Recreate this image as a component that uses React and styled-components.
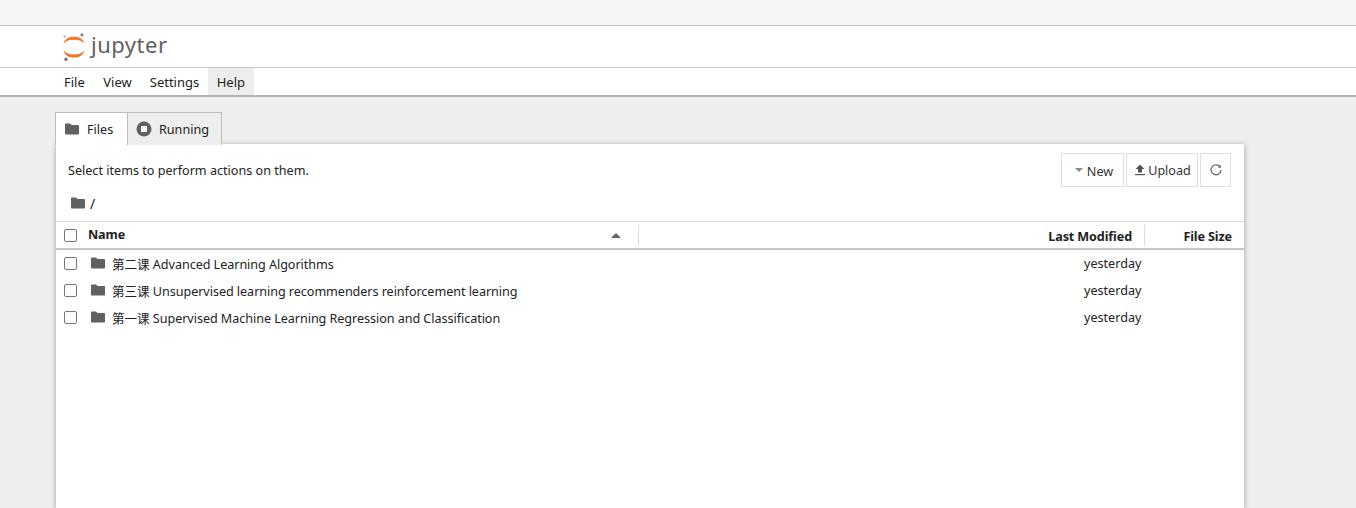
import React from "react";
import styled, { createGlobalStyle } from "styled-components";

const GlobalStyle = createGlobalStyle`
html, body {
  margin: 0;
  padding: 0;
  height: 508px;
  overflow: hidden;
  background: #eeeeee;
  font-family: "Noto Sans", "Noto Sans CJK SC", sans-serif;
  font-size: 12.6px;
  color: #222;
}
* { box-sizing: border-box; }
`

const Page = styled.div`
height: 508px;
display: flex;
flex-direction: column;
overflow: hidden;
`

const BrowserStrip = styled.div`
height: 26px;
flex: none;
background: #f6f6f6;
border-bottom: 1px solid #c4c4c4;
`

const Header = styled.div`
height: 42px;
flex: none;
background: #fff;
border-bottom: 1px solid #c4c4c4;
display: flex;
align-items: center;
padding-left: 62px;
gap: 5px;
`

const Wordmark = styled.span`
font-family: "Noto Sans", sans-serif;
font-size: 22px;
color: #616161;
letter-spacing: 0.5px;
line-height: 1;
margin-top: -5px;
`

const MenuBar = styled.div`
height: 29px;
flex: none;
background: #fff;
border-bottom: 2px solid #b4b4b4;
display: flex;
padding-left: 55px;
font-size: 13px;
`

const MenuItem = styled.div`
height: 27px;
padding: 0 9px;
display: flex;
align-items: center;
background: ${({ $active }) => ($active ? "#ededed" : "transparent")};

&:first-child {
  padding-right: 9.5px;
}
&:nth-child(3) {
  padding-right: 8.5px;
}
`

const Content = styled.div`
flex: 1;
padding: 15px 0 0 55px;
display: flex;
flex-direction: column;
min-height: 0;
`

const Tabs = styled.div`
display: flex;
height: 33px;
flex: none;
position: relative;
z-index: 2;
`

const Tab = styled.div`
height: 33px;
width: ${({ $width }) => $width}px;
display: flex;
align-items: center;
gap: ${({ $gap }) => $gap}px;
padding-left: ${({ $pad }) => $pad}px;
background: ${({ $active }) => ($active ? "#fff" : "#eeeeee")};
border: 1px solid #bdbdbd;
border-bottom: none;
border-left: ${({ $active }) => ($active ? "1px solid #bdbdbd" : "none")};
`

const Card = styled.div`
width: 1188px;
margin-left: 1px;
margin-top: -1px;
flex: 1;
background: #fff;
box-shadow: 0 1px 5px rgba(0, 0, 0, 0.35);
display: flex;
flex-direction: column;
`

const Toolbar = styled.div`
height: 42px;
flex: none;
display: flex;
align-items: flex-start;
justify-content: space-between;
padding: 9px 13px 0 12px;
`

const Hint = styled.div`
margin-top: 9px;
`

const Buttons = styled.div`
display: flex;
gap: 2px;
`

const Button = styled.div`
height: 34px;
width: ${({ $width }) => $width}px;
padding-left: ${({ $pad }) => $pad || 0}px;
border: 1px solid #e0e0e0;
display: flex;
align-items: center;
justify-content: center;
gap: ${({ $gap }) => $gap || 0}px;
color: #333;
`

const NewLabel = styled.span`
margin-top: 2px;
`

const Breadcrumb = styled.div`
height: 36px;
flex: none;
display: flex;
align-items: center;
gap: 4px;
padding: 0 0 1px 14px;
border-bottom: 1px solid #e0e0e0;
font-size: 14px;
`

const TableHead = styled.div`
height: 28px;
flex: none;
display: flex;
align-items: center;
border-bottom: 2px solid #c8c8c8;
font-weight: 700;
letter-spacing: -0.12px;
`

const Checkbox = styled.span`
width: 13px;
height: 13px;
flex: none;
border: 1px solid #777;
border-radius: 2px;
background: #fff;
margin-left: 8px;
`

const NameHead = styled.div`
width: 523px;
margin-left: 11px;
margin-top: -1px;
`

const SortCell = styled.div`
width: 28px;
height: 21px;
display: flex;
align-items: center;
border-right: 1px solid #dedede;
`

const ModifiedHead = styled.div`
width: 506px;
height: 21px;
display: flex;
align-items: center;
justify-content: flex-end;
padding: 2px 12px 0 0;
margin-top: 1px;
border-right: 1px solid #dedede;
`

const SizeHead = styled.div`
flex: 1;
text-align: right;
padding-right: 12px;
margin-top: 3px;
`

const Row = styled.div`
height: 27px;
display: flex;
align-items: center;
`

const RowIcon = styled.span`
margin-left: 13px;
margin-top: -2px;
display: flex;
`

const RowName = styled.div`
margin-left: 6px;
width: 972px;
letter-spacing: -0.05px;
`

const RowDate = styled.div`
margin-top: -1px;
`

const FolderIcon = ({ size = 16 }) => (
  <svg width={size} height={size} viewBox="0 0 16 16" fill="#616161">
    <path d="M1 3.5C1 2.9 1.4 2.5 2 2.5h4l1.5 1.5H14c.6 0 1 .4 1 1v7.500c0 .6-.4 1-1 1H2c-.6 0-1-.4-1-1z" />
  </svg>
);

const RunningIcon = () => (
  <svg width="16" height="16" viewBox="0 0 16 16">
    <circle cx="8" cy="8" r="7.500" fill="#616161" />
    <rect x="5" y="5" width="6" height="6" rx="1" fill="#fff" />
  </svg>
);

const Logo = () => (
  <svg width="24" height="28" viewBox="0 0 24 28">
    <path d="M1.500 10.500C3 5.500 7 3.800 12 3.800s9 1.700 10.500 6.700C20 7.800 16.500 6.800 12 6.800s-8 1-10.500 3.700z" fill="#f37726" />
    <path d="M1.500 17.500C3 22.800 7 24.600 12 24.600s9-1.800 10.500-7.100C20 20.400 16.500 21.500 12 21.500s-8-1.100-10.500-4z" fill="#f37726" />
    <circle cx="20" cy="1.800" r="1.500" fill="#767677" />
    <circle cx="2.500" cy="3.500" r="1.100" fill="#989798" />
    <circle cx="4" cy="26.300" r="1.700" fill="#757575" />
  </svg>
);

const UploadIcon = () => (
  <svg width="12" height="14" viewBox="0 0 12 14" fill="#555">
    <path d="M6 1.500 10.500 6H8v3.500H4V6H1.500z" />
    <rect x="1" y="11" width="10" height="1.200" />
  </svg>
);

const RefreshIcon = () => (
  <svg width="14" height="14" viewBox="0 0 14 14" fill="none" stroke="#666" strokeWidth="1.200">
    <path d="M11.300 4.200A5 5 0 1 0 12 7" />
    <path d="M11.800 1.800v3h-3" fill="#666" stroke="none" />
  </svg>
);

const Caret = styled.span`
width: 0;
height: 0;
border-left: ${({ $size }) => $size}px solid transparent;
border-right: ${({ $size }) => $size}px solid transparent;
${({ $up, $size, $color }) => $up
    ? `border-bottom: ${$size}px solid ${$color};`
    : `border-top: ${$size}px solid ${$color};`}
`

const folders = [
  "第二课 Advanced Learning Algorithms",
  "第三课 Unsupervised learning recommenders reinforcement learning",
  "第一课 Supervised Machine Learning Regression and Classification",
];

const App = () => {
  return <Page>
    <GlobalStyle />
    <BrowserStrip />
    <Header>
      <Logo />
      <Wordmark>jupyter</Wordmark>
    </Header>
    <MenuBar>
      <MenuItem>File</MenuItem>
      <MenuItem>View</MenuItem>
      <MenuItem>Settings</MenuItem>
      <MenuItem $active>Help</MenuItem>
    </MenuBar>
    <Content>
      <Tabs>
        <Tab $active $width={73} $pad={8} $gap={7}><FolderIcon />Files</Tab>
        <Tab $width={94} $pad={8} $gap={7}><RunningIcon />Running</Tab>
      </Tabs>
      <Card>
        <Toolbar>
          <Hint>Select items to perform actions on them.</Hint>
          <Buttons>
            <Button $width={63} $pad={3} $gap={4}><Caret $size={4} $color="#888" /><NewLabel>New</NewLabel></Button>
            <Button $width={72} $pad={1} $gap={2}><UploadIcon />Upload</Button>
            <Button $width={31}><RefreshIcon /></Button>
          </Buttons>
        </Toolbar>
        <Breadcrumb><FolderIcon />/</Breadcrumb>
        <TableHead>
          <Checkbox />
          <NameHead>Name</NameHead>
          <SortCell><Caret $up $size={5} $color="#666" /></SortCell>
          <ModifiedHead>Last Modified</ModifiedHead>
          <SizeHead>File Size</SizeHead>
        </TableHead>
        {folders.map((name) => (
          <Row key={name}>
            <Checkbox />
            <RowIcon><FolderIcon /></RowIcon>
            <RowName>{name}</RowName>
            <RowDate>yesterday</RowDate>
          </Row>
        ))}
      </Card>
    </Content>
  </Page>
}

export default App
